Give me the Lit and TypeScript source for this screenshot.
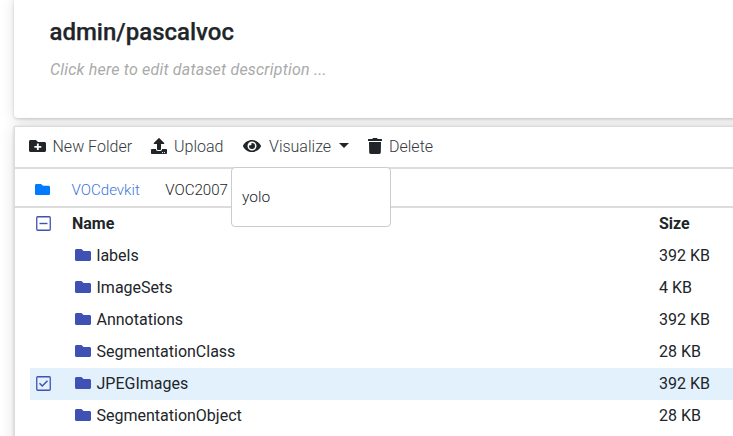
import { LitElement, html, css, svg } from "lit";
import { customElement, property } from "lit/decorators.js";

const FA_FOLDER = "M464 128H272l-64-64H48C21.49 64 0 85.49 0 112v288c0 26.51 21.49 48 48 48h416c26.51 0 48-21.49 48-48V176c0-26.51-21.49-48-48-48z";

const icons: Record<string, { box: string; shape: unknown }> = {
  folder: { box: "0 64 512 384", shape: svg`<path d=${FA_FOLDER} />` },
  folderPlus: {
    box: "0 64 512 384",
    shape: svg`<path fill-rule="evenodd" d="M464 128H272l-64-64H48C21.49 64 0 85.49 0 112v288c0 26.51 21.49 48 48 48h416c26.51 0 48-21.49 48-48V176c0-26.51-21.49-48-48-48zM370 310h-76v76h-56v-76h-76v-56h76v-76h56v76h76z" />`,
  },
  upload: {
    box: "0 0 512 512",
    shape: svg`<path d="M296 384h-80c-13.300 0-24-10.700-24-24V192h-87.700c-17.800 0-26.700-21.500-14.100-34.100L242.300 5.700c7.500-7.500 19.800-7.500 27.300 0l152.200 152.200c12.600 12.600 3.700 34.100-14.100 34.100H320v168c0 13.300-10.700 24-24 24zm216-8v112c0 13.300-10.700 24-24 24H24c-13.300 0-24-10.700-24-24V376c0-13.300 10.700-24 24-24h136v8c0 30.900 25.100 56 56 56h80c30.900 0 56-25.100 56-56v-8h136c13.300 0 24 10.700 24 24zm-124 88c0-11-9-20-20-20s-20 9-20 20 9 20 20 20 20-9 20-20zm64 0c0-11-9-20-20-20s-20 9-20 20 9 20 20 20 20-9 20-20z" />`,
  },
  eye: {
    box: "0 64 576 384",
    shape: svg`<path d="M572.520 241.400C518.290 135.590 410.930 64 288 64S57.680 135.640 3.480 241.410a32.350 32.350 0 0 0 0 29.190C57.710 376.410 165.070 448 288 448s230.320-71.640 284.520-177.410a32.350 32.350 0 0 0 0-29.190zM288 400a144 144 0 1 1 144-144 143.930 143.930 0 0 1-144 144zm0-240a95.310 95.310 0 0 0-25.310 3.790 47.850 47.850 0 0 1-66.900 66.900A95.780 95.780 0 1 0 288 160z" />`,
  },
  trash: {
    box: "0 0 448 512",
    shape: svg`<path d="M432 32H312l-9.400-18.700A24 24 0 0 0 281.100 0H166.800a23.720 23.720 0 0 0-21.400 13.300L136 32H16A16 16 0 0 0 0 48v32a16 16 0 0 0 16 16h416a16 16 0 0 0 16-16V48a16 16 0 0 0-16-16zM32 128l6 339a48 48 0 0 0 47.900 45h276.200a48 48 0 0 0 47.900-45L416 128z" />`,
  },
  caret: { box: "0 0 10 5", shape: svg`<path d="M0 0H10L5 5Z" />` },
  partial: {
    box: "0 0 15 15",
    shape: svg`<rect x=".75" y=".75" width="13.500" height="13.500" rx="1" fill="none" stroke="currentColor" stroke-width="1.300"/><path d="M3.500 6.800h8v1.400h-8z"/>`,
  },
  checked: {
    box: "0 0 15 15",
    shape: svg`<rect x=".75" y=".75" width="13.500" height="13.500" rx="1" fill="none" stroke="currentColor" stroke-width="1.300"/><path d="M3.500 7.300L6.300 10L11.500 4.700" fill="none" stroke="currentColor" stroke-width="1.500"/>`,
  },
};

@customElement("ui-icon")
export class UiIcon extends LitElement {
  @property() name = "folder";
  static styles = css`
    :host { display: block; flex: none; }
    svg { display: block; width: 100%; height: 100%; fill: currentColor; }
  `;
  render() {
    const icon = icons[this.name];
    return html`<svg viewBox=${icon.box} preserveAspectRatio="none" aria-hidden="true">${icon.shape}</svg>`;
  }
}

interface Entry { name: string; size: string; selected?: boolean; }

@customElement("app-root")
export class AppRoot extends LitElement {
  static styles = css`
    :host {
      display: flex; flex-direction: column; gap: 8px;
      box-sizing: border-box; width: 100%; height: 436px;
      overflow: hidden; padding-left: 14px;
      background: #fff; color: #212529;
      font: 400 16px/24px Roboto, sans-serif;
    }
    .card { background: #fff; box-shadow: 0 1px 3px rgba(0,0,0,.16), 0 1px 14px rgba(0,0,0,.13); margin-right: -20px; }
    .summary { box-sizing: border-box; height: 120px; margin-top: -2px; padding: 18px 36px; border-radius: 4px; flex: none; }
    h1 { margin: 0 0 0 -0.5px; font-size: 24px; line-height: 32px; font-weight: 500; -webkit-text-stroke: .25px currentColor; }
    .description { margin-top: 10px; font-style: italic; color: #aaa; line-height: 24px; letter-spacing: .2px; }
    .files { flex: none; height: 330px; border: 1px solid #dcdcdc; box-sizing: border-box; }
    .toolbar { position: relative; display: flex; height: 40px; box-sizing: border-box; align-items: center; padding-left: 14px; font-weight: 300; }
    .tool { display: flex; align-items: center; }
    .tool ui-icon { margin-bottom: 2px; }
    .new { gap: 6.500px; width: 122px; }
    .new ui-icon { width: 17px; height: 12px; }
    .upload { gap: 7px; width: 92px; }
    .upload ui-icon { width: 16px; height: 16px; }
    .visualize { gap: 8px; width: 125px; }
    .visualize .eye { width: 18px; height: 12px; }
    .visualize .caret { width: 10px; height: 5px; margin-bottom: 3px; }
    .delete { gap: 7px; }
    .delete ui-icon { width: 14px; height: 16px; }
    .tool span { color: #343a40; }
    .menu {
      position: absolute; z-index: 2; left: 216px; top: 40px; width: 160px; height: 60px;
      box-sizing: border-box; border: 1px solid #ccc; border-radius: 4px; background: #fff;
      padding: 17px 10px; font-size: 15.500px; font-weight: 300;
    }
    .path { display: flex; align-items: center; height: 41px; box-sizing: border-box; padding: 3px 0 0 19.500px; border: solid #dcdcdc; border-width: 2px 0; font-size: 15.100px; font-weight: 300; }
    .path a, .path span { margin-top: 2px; }
    .path ui-icon { width: 15px; height: 11px; color: #007bff; margin-right: 22px; }
    .path a { color: #3c78dc; margin-right: 25.500px; }
    .row { display: grid; grid-template-columns: 42px 587px 1fr; align-items: center; height: 32px; margin-left: 15px; }
    .check { width: 15px; height: 15px; margin: 0 0 2px 6px; color: #3f51b5; }
    .name { display: flex; align-items: center; gap: 6px; padding-left: 2.500px; }
    .name ui-icon { width: 16px; height: 12px; margin-bottom: 2px; color: #3f51b5; }
    .selected { background: #e3f1fd; }
    .head { font-weight: 700; }
  `;

  private entries: Entry[] = [
    { name: "labels", size: "392 KB" },
    { name: "ImageSets", size: "4 KB" },
    { name: "Annotations", size: "392 KB" },
    { name: "SegmentationClass", size: "28 KB" },
    { name: "JPEGImages", size: "392 KB", selected: true },
    { name: "SegmentationObject", size: "28 KB" },
  ];

  render() {
    return html`
      <section class="card summary">
        <h1>admin/pascalvoc</h1>
        <div class="description">Click here to edit dataset description ...</div>
      </section>
      <section class="card files">
        <div class="toolbar">
          <div class="tool new"><ui-icon name="folderPlus"></ui-icon><span>New Folder</span></div>
          <div class="tool upload"><ui-icon name="upload"></ui-icon><span>Upload</span></div>
          <div class="tool visualize"><ui-icon class="eye" name="eye"></ui-icon><span>Visualize</span><ui-icon class="caret" name="caret"></ui-icon></div>
          <div class="tool delete"><ui-icon name="trash"></ui-icon><span>Delete</span></div>
          <div class="menu">yolo</div>
        </div>
        <nav class="path"><ui-icon name="folder"></ui-icon><a>VOCdevkit</a><span>VOC2007</span></nav>
        <div class="row head"><ui-icon class="check" name="partial"></ui-icon><span>Name</span><span>Size</span></div>
        ${this.entries.map((e) => html`
          <div class="row ${e.selected ? "selected" : ""}">
            ${e.selected ? html`<ui-icon class="check" name="checked"></ui-icon>` : html`<i></i>`}
            <span class="name"><ui-icon name="folder"></ui-icon>${e.name}</span>
            <span>${e.size}</span>
          </div>`)}
      </section>
    `;
  }
}
